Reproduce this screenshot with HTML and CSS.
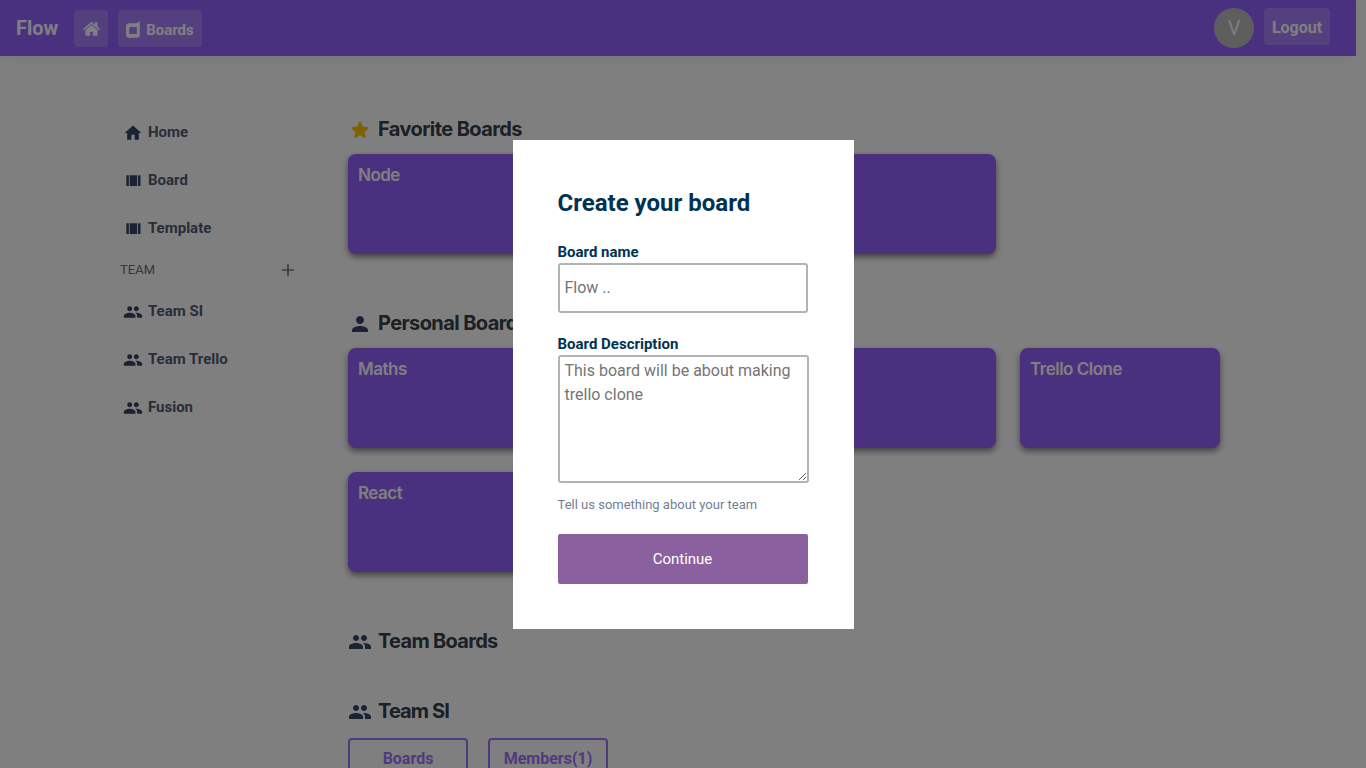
FILE: index.html
```html
<!DOCTYPE html>
<html lang="en">
<head>
<meta charset="utf-8">
<title>Flow</title>
<link rel="stylesheet" href="styles.css">
</head>
<body>
<svg class="sprite" aria-hidden="true">
  <symbol id="home" viewBox="0 0 24 24"><path d="M10 20v-6h4v6h5v-8h3L12 3 2 12h3v8z"/></symbol>
  <symbol id="array" viewBox="0 0 24 24"><path d="M4 18h3V5H4v13zM18 5v13h3V5h-3zM8 18h9V5H8v13z"/></symbol>
  <symbol id="people" viewBox="0 0 24 24"><path d="M16 11c1.66 0 2.99-1.34 2.99-3S17.660 5 16 5c-1.660 0-3 1.340-3 3s1.340 3 3 3zm-8 0c1.660 0 2.990-1.340 2.990-3S9.660 5 8 5C6.340 5 5 6.340 5 8s1.340 3 3 3zm0 2c-2.330 0-7 1.170-7 3.500V19h14v-2.500c0-2.330-4.670-3.500-7-3.500zm8 0c-.29 0-.62.02-.97.05 1.160.84 1.970 1.970 1.970 3.450V19h6v-2.500c0-2.330-4.670-3.500-7-3.500z"/></symbol>
  <symbol id="person" viewBox="0 0 24 24"><path d="M12 12c2.210 0 4-1.790 4-4s-1.790-4-4-4-4 1.790-4 4 1.790 4 4 4zm0 2c-2.670 0-8 1.340-8 4v2h16v-2c0-2.660-5.330-4-8-4z"/></symbol>
  <symbol id="star" viewBox="0 0 24 24"><path d="M12 17.27l4.150 2.510c.76.46 1.690-.22 1.490-1.080l-1.100-4.720 3.670-3.180c.67-.58.31-1.680-.57-1.750l-4.830-.41-1.890-4.460c-.34-.81-1.500-.81-1.840 0L9.190 8.630l-4.830.41c-.88.07-1.240 1.170-.57 1.750l3.670 3.180-1.100 4.720c-.2.86.73 1.540 1.490 1.080l4.150-2.500z"/></symbol>
  <symbol id="add" viewBox="0 0 24 24"><path d="M19 13h-6v6h-2v-6H5v-2h6V5h2v6h6v2z"/></symbol>
</svg>

<header class="topbar">
  <span class="brand">Flow</span>
  <button class="bar-btn home-btn" aria-label="Home">
    <svg width="17" height="14" viewBox="90 253 1612 1283"><path d="M1472 992v480q0 26-19 45t-45 19H1024v-384H768v384H384q-26 0-45-19t-19-45V992q0-1 .5-3t.5-3l575-474 575 474q1 2 1 6zm223-69l-62 74q-8 9-21 11h-3q-13 0-21-7L896 424l-692 577q-12 8-24 7-13-2-21-11l-62-74q-8-10-7-23.500t11-21.500l719-599q32-26 76-26t76 26l244 204V288q0-14 9-23t23-9h192q14 0 23 9t9 23v408l219 182q10 8 11 21.500t-7 23.500z"/></svg>
  </button>
  <button class="bar-btn boards-btn">
    <svg width="14" height="17" viewBox="0 0 14 17"><path fill-rule="evenodd" d="M13.500 0C12.600 1.300 11.500 2 9.800 2.200L3 2.300Q0 2.500 0 5.500V13.500Q0 16.800 3.200 16.800H10.600Q13.800 16.800 13.800 13.500V0ZM3.300 6H10.800V13H3.300Z"/></svg>
    Boards
  </button>
  <span class="avatar">V</span>
  <button class="bar-btn logout-btn">Logout</button>
</header>

<div class="page">
  <nav class="sidebar">
    <a class="nav-item"><svg><use href="#home"/></svg>Home</a>
    <a class="nav-item"><svg><use href="#array"/></svg>Board</a>
    <a class="nav-item"><svg><use href="#array"/></svg>Template</a>
    <div class="team-head">TEAM<svg><use href="#add"/></svg></div>
    <a class="nav-item"><svg><use href="#people"/></svg>Team SI</a>
    <a class="nav-item"><svg><use href="#people"/></svg>Team Trello</a>
    <a class="nav-item"><svg><use href="#people"/></svg>Fusion</a>
  </nav>
  <main class="content">
    <section class="group">
      <h2 class="heading starred"><svg><use href="#star"/></svg><span class="t-favorite">Favorite Boards</span></h2>
      <div class="cards">
        <div class="card">Node</div><div class="card"></div><div class="card"></div>
      </div>
    </section>
    <section class="group">
      <h2 class="heading"><svg><use href="#person"/></svg><span class="t-personal">Personal Boards</span></h2>
      <div class="cards">
        <div class="card">Maths</div><div class="card"></div><div class="card"></div><div class="card">Trello Clone</div>
        <div class="card">React</div>
      </div>
    </section>
    <section class="group teams">
      <h2 class="heading"><svg><use href="#people"/></svg><span class="t-team">Team Boards</span></h2>
    </section>
    <section>
      <h2 class="heading"><svg><use href="#people"/></svg><span class="t-si">Team SI</span></h2>
      <div class="tabs"><button class="tab">Boards</button><button class="tab">Members(1)</button></div>
    </section>
  </main>
</div>

<div class="overlay">
  <form class="modal">
    <h1 class="modal-title">Create your board</h1>
    <label class="label" for="name">Board name</label>
    <input class="field" id="name" placeholder="Flow ..">
    <label class="label" for="desc">Board Description</label>
    <textarea class="field area" id="desc" placeholder="This board will be about making trello clone"></textarea>
    <p class="hint">Tell us something about your team</p>
    <button class="submit" type="button">Continue</button>
  </form>
</div>
</body>
</html>
```
FILE: styles.css
```css
* { box-sizing: border-box; }
html, body { height: 100%; }
body { margin: 0; overflow: hidden; background: #fff; font-family: Roboto, sans-serif; color: #172b4d; }
h1, h2, p { margin: 0; }
button, input, textarea { font-family: inherit; margin: 0; }
.sprite { position: absolute; width: 0; height: 0; }

.topbar { width: 1356px; height: 56px; padding: 0 26px 0 16px; display: flex; align-items: center; background: #9462fe; box-shadow: 0 4px 12px rgba(0, 0, 0, .05); }
.brand { width: 58px; font-size: 20px; font-weight: 700; color: #fff; }
.bar-btn { height: 37px; padding: 0; display: flex; align-items: center; justify-content: center; border: 0; border-radius: 4px; background: rgba(255, 255, 255, .2); color: #fff; font-weight: 700; }
.bar-btn svg { fill: #fff; }
.home-btn { width: 34px; margin: 1px 10px 0 0; }
.boards-btn { width: 84px; margin-top: 1px; padding-top: 3px; gap: 6px; font-size: 15px; }
.boards-btn svg { margin-top: -2px; }
.avatar { width: 40px; height: 40px; margin: 0 10px 0 auto; display: flex; align-items: center; justify-content: center; border-radius: 50%; background: #bdbdbd; color: #fafafa; font-size: 20px; }
.logout-btn { width: 66px; margin-top: -3px; padding-top: 2px; font-size: 16px; }

.page { display: flex; }
.sidebar { width: 348px; padding: 52px 54px 0 120px; }
.nav-item { height: 48px; padding-left: 3px; display: flex; align-items: center; gap: 5px; font-size: 15px; font-weight: 700; color: #4f5c72; }
.nav-item svg { width: 20px; height: 20px; margin-top: 2px; fill: #344568; }
.team-head { height: 35px; display: flex; align-items: center; justify-content: space-between; font-size: 13px; color: #6f6f6f; }
.team-head svg { width: 20px; height: 20px; margin-right: -4px; fill: #777; }

.content { flex: 1; padding-top: 62px; }
.group { margin-bottom: 58px; }
.teams { margin-bottom: 46px; }
.heading { height: 24px; display: flex; align-items: center; gap: 6px; font: 700 20px/22px Inter, sans-serif; color: #36404c; white-space: nowrap; }
.heading svg { width: 24px; height: 24px; fill: #344568; }
.heading span { margin-top: -3px; }
.starred svg { fill: #ffc400; }
.t-favorite, .t-personal { letter-spacing: -.6px; }
.t-team { letter-spacing: -.7px; }
.t-si { letter-spacing: -.9px; }
.cards { margin-top: 12px; display: grid; grid-template-columns: repeat(4, 200px); gap: 24px; }
.card { height: 100px; padding: 10px; border-radius: 8px; background: #9462fe; box-shadow: 0 3px 6px rgba(0, 0, 0, .5); color: #fff; font: 600 17px/22px Inter, sans-serif; letter-spacing: -.5px; }
.tabs { margin-top: 14px; display: flex; gap: 20px; }
.tab { width: 120px; height: 40px; padding: 0; border: 2px solid #9462fe; border-radius: 4px; background: none; color: #9462fe; font-size: 16px; font-weight: 700; opacity: .88; }

.overlay { position: fixed; inset: 0; display: flex; align-items: center; justify-content: center; background: rgba(0, 0, 0, .5); }
.modal { width: 341px; height: 489px; padding: 45px; display: flex; flex-direction: column; align-items: flex-start; background: #fff; }
.modal-title { height: 56px; font-size: 24px; line-height: 36px; font-weight: 700; color: #003254; }
.label { height: 22px; font-size: 15px; line-height: 22px; font-weight: 700; color: #003254; }
.field { width: 250px; height: 50px; margin-bottom: 20px; padding: 0 5px; border: 2px solid #b3b3b3; border-radius: 3px; background: #fff; font-size: 16px; outline: none; }
.field::placeholder { color: #757575; }
.area { width: 251px; height: 128px; padding: 2px 5px; line-height: 24px; margin-bottom: 12px; }
.hint { height: 39px; font-size: 13px; line-height: 20px; color: #718096; }
.submit { width: 250px; height: 50px; padding: 0; border: 0; border-radius: 2px; background: #8a619e; color: #fff; font-size: 15px; }
```
